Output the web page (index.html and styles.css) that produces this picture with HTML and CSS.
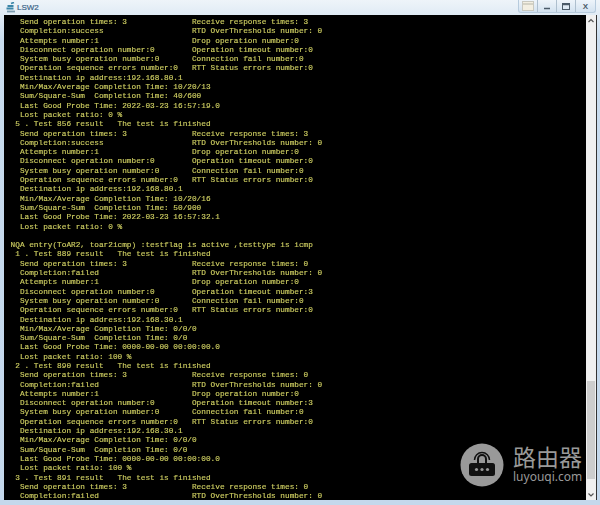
FILE: index.html
```html
<!DOCTYPE html>
<html lang="en">
<head>
<meta charset="utf-8">
<title>LSW2</title>
<link rel="stylesheet" href="styles.css">
</head>
<body>
<div class="window">
  <header class="titlebar">
    <svg class="app-icon" width="9" height="11" viewBox="0 0 9 11"><path d="M5 1.500l3-1M1.500 4h6M.5 6.500h7" stroke="#3c86a8" stroke-width="1.800" fill="none"/><path d="M1 9.500h8" stroke="#7d9db0" stroke-width="1.800"/></svg>
    <span class="title">LSW2</span>
    <div class="controls">
      <span class="ctl"><svg width="12" height="10" viewBox="0 0 12 10"><rect x="0.500" y="0.500" width="11" height="9" fill="#f3efe2" stroke="#c9c9c0"/><path d="M1 3h10" stroke="#b5b5a8"/></svg></span>
      <span class="ctl"><svg width="8" height="8" viewBox="0 0 8 8"><path d="M1 6.500h6" stroke="#4a5a68" stroke-width="1.500"/></svg></span>
      <span class="ctl"><svg width="8" height="7" viewBox="0 0 8 7"><rect x="0.500" y="0.500" width="7" height="6" fill="none" stroke="#4a5a68"/><path d="M0 1.500h8" stroke="#4a5a68" stroke-width="1.500"/></svg></span>
      <span class="ctl ctl-x">X</span>
    </div>
  </header>
  <div class="body">
<pre class="term">  Send operation times: 3              Receive response times: 3
  Completion:success                   RTD OverThresholds number: 0
  Attempts number:1                    Drop operation number:0
  Disconnect operation number:0        Operation timeout number:0
  System busy operation number:0       Connection fail number:0
  Operation sequence errors number:0   RTT Status errors number:0
  Destination ip address:192.168.80.1
  Min/Max/Average Completion Time: 10/20/13
  Sum/Square-Sum  Completion Time: 40/600
  Last Good Probe Time: 2022-03-23 16:57:19.0
  Lost packet ratio: 0 %
 5 . Test 856 result   The test is finished
  Send operation times: 3              Receive response times: 3
  Completion:success                   RTD OverThresholds number: 0
  Attempts number:1                    Drop operation number:0
  Disconnect operation number:0        Operation timeout number:0
  System busy operation number:0       Connection fail number:0
  Operation sequence errors number:0   RTT Status errors number:0
  Destination ip address:192.168.80.1
  Min/Max/Average Completion Time: 10/20/16
  Sum/Square-Sum  Completion Time: 50/900
  Last Good Probe Time: 2022-03-23 16:57:32.1
  Lost packet ratio: 0 %

NQA entry(ToAR2, toar2icmp) :testflag is active ,testtype is icmp
 1 . Test 889 result   The test is finished
  Send operation times: 3              Receive response times: 0
  Completion:failed                    RTD OverThresholds number: 0
  Attempts number:1                    Drop operation number:0
  Disconnect operation number:0        Operation timeout number:3
  System busy operation number:0       Connection fail number:0
  Operation sequence errors number:0   RTT Status errors number:0
  Destination ip address:192.168.30.1
  Min/Max/Average Completion Time: 0/0/0
  Sum/Square-Sum  Completion Time: 0/0
  Last Good Probe Time: 0000-00-00 00:00:00.0
  Lost packet ratio: 100 %
 2 . Test 890 result   The test is finished
  Send operation times: 3              Receive response times: 0
  Completion:failed                    RTD OverThresholds number: 0
  Attempts number:1                    Drop operation number:0
  Disconnect operation number:0        Operation timeout number:3
  System busy operation number:0       Connection fail number:0
  Operation sequence errors number:0   RTT Status errors number:0
  Destination ip address:192.168.30.1
  Min/Max/Average Completion Time: 0/0/0
  Sum/Square-Sum  Completion Time: 0/0
  Last Good Probe Time: 0000-00-00 00:00:00.0
  Lost packet ratio: 100 %
 3 . Test 891 result   The test is finished
  Send operation times: 3              Receive response times: 0
  Completion:failed                    RTD OverThresholds number: 0</pre>
    <div class="scrollbar">
      <svg class="arrow" width="10" height="11" viewBox="0 0 10 11"><path d="M2.500 7l2.500-2.500 2.500 2.500" fill="none" stroke="#555" stroke-width="1.200"/></svg>
      <div class="track"><div class="thumb"></div></div>
      <svg class="arrow" width="10" height="11" viewBox="0 0 10 11"><path d="M2.500 4.500l2.500 2.500 2.500-2.500" fill="none" stroke="#555" stroke-width="1.200"/></svg>
    </div>
    <div class="watermark">
      <svg class="wm-icon" width="44" height="44" viewBox="0 0 44 44">
        <circle cx="22" cy="22" r="21.500" fill="#999"/>
        <rect x="9" y="20" width="26" height="13" rx="2.500" fill="#111"/>
        <path d="M18 20v-4a4 4 0 0 1 8 0v4" fill="none" stroke="#111" stroke-width="2"/>
        <path d="M14.500 17a7.500 7.500 0 0 1 15 0" fill="none" stroke="#111" stroke-width="1.500"/>
        <circle cx="16.500" cy="26.500" r="1.600" fill="#999"/><circle cx="22" cy="26.500" r="1.600" fill="#999"/><circle cx="27.500" cy="26.500" r="1.600" fill="#999"/>
      </svg>
      <div class="wm-text">
        <div class="wm-cn">路由器</div>
        <div class="wm-en">luyouqi.com</div>
      </div>
    </div>
  </div>
</div>
</body>
</html>
```

FILE: styles.css
```css
* { box-sizing: border-box; }
html, body { margin: 0; height: 100%; }
body { background: #cfdfee; overflow: hidden; }
.window {
  width: 600px;
  height: 505px;
  display: flex;
  flex-direction: column;
  padding: 0 3px 5px 4px;
  background: linear-gradient(#eef4f9, #c9dcee 40px, #c4d8ec);
  position: relative;
}
.titlebar {
  height: 15px;
  flex: none;
  display: flex;
  align-items: center;
  gap: 2px;
  padding-left: 2px;
}
.title {
  font: 8px "Liberation Sans", sans-serif;
  color: #3a6488;
  -webkit-text-stroke: 0.200px #3a6488;
}
.controls {
  margin-left: auto;
  margin-right: 1px;
  height: 13px;
  align-self: flex-start;
  display: flex;
  background: linear-gradient(#eef4fa, #d3e2f0);
  border: 1px solid #b7cbdd;
  border-top: 0;
  border-radius: 0 0 3px 3px;
}
.ctl {
  width: 19px;
  display: flex;
  align-items: center;
  justify-content: center;
  border-right: 1px solid #aebfce;
}
.ctl:last-child { border-right: 0; }
.ctl-x { font: bold 8px "Liberation Sans", sans-serif; color: #4a5a68; }
.body {
  flex: 1;
  display: flex;
  min-height: 0;
  position: relative;
  border-right: 1px solid #333;
}
.term {
  flex: 1;
  margin: 0;
  padding: 3px 0 0 6.600px;
  background: #000;
  color: #cfcf62;
  font: 7.750px/9.300px "Liberation Mono", monospace;
  -webkit-text-stroke: 0.150px #cfcf62;
  overflow: hidden;
  filter: blur(0.400px);
}
.scrollbar {
  width: 10px;
  flex: none;
  display: flex;
  flex-direction: column;
  background: #f0f0f0;
}
.arrow { flex: none; display: block; }
.track { flex: 1; display: flex; flex-direction: column; justify-content: flex-end; }
.thumb { height: 98px; margin: 0 1px 10px; background: #cdcdcd; }
.watermark {
  position: absolute;
  left: 456px;
  top: 428px;
  display: flex;
  gap: 9px;
  align-items: flex-start;
}
.wm-text { color: #999; }
.wm-cn { font: 23px/27px "Noto Sans CJK SC", sans-serif; }
.wm-en { font: 12px/13px "Noto Sans", sans-serif; }
```
